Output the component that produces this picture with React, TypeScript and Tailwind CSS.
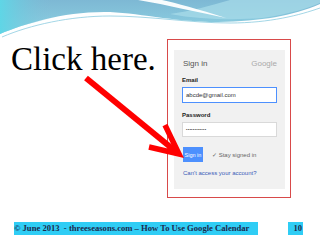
export default function App() {
  return (
    <div className="relative flex h-[240px] w-[320px] flex-col overflow-hidden bg-white font-['Liberation_Sans',Arial,sans-serif]">
      {/* Wave header */}
      <svg className="absolute left-0 top-0" width="320" height="40" viewBox="0 0 320 40">
        <defs>
          <linearGradient id="wv" x1="0" y1="0" x2="0" y2="1">
            <stop offset="0" stopColor="#7db8d4" />
            <stop offset="1" stopColor="#8fd3e3" />
          </linearGradient>
          <linearGradient id="wl" x1="0" y1="0" x2="1" y2="0">
            <stop offset="0" stopColor="#5fd6e6" />
            <stop offset="0.4" stopColor="#7ebfd8" stopOpacity="0" />
          </linearGradient>
        </defs>
        <path d="M0,0 H320 V4 C292,16 262,21 218,22 C172,22 136,12 104,12 C62,12 24,24 0,34 Z" fill="url(#wv)" />
        <path d="M0,0 H130 V12 C60,12 24,24 0,34 Z" fill="url(#wl)" />
        <path d="M170,14 C200,20 240,20 262,18 C290,14 308,8 320,3 V0 H230 C210,6 190,11 170,14 Z" fill="#a9dde9" opacity="0.7" />
        <path d="M138,0 C168,5 196,12 226,18 C198,9 176,3 162,0 Z" fill="#ffffff" opacity="0.95" />
        <path d="M2,37 C30,25 70,16 110,16 C150,16 190,23 230,23 C270,23 300,15 320,8" fill="none" stroke="#8ccbe0" strokeWidth="0.8" />
      </svg>

      {/* Main */}
      <div className="flex pt-[39px]">
        <div className="w-[167px] pl-[11px] pt-[4px] font-['Liberation_Serif',serif] text-[33px] leading-[33px] text-black">
          Click here.
        </div>
        <div className="h-[159px] w-[124px] border border-[#d84a4a] pb-[8px] pl-[6px] pr-[5px] pt-[10px]">
          <div className="flex h-full flex-col bg-[#f1f1f1] px-[8px] pt-[9px] text-[6px] leading-[8px]">
            <div className="flex items-center justify-between pl-[1px] text-[8px] leading-[10px]">
              <span className="text-[#555]">Sign in</span>
              <span className="text-[#aaa]">Google</span>
            </div>
            <div className="mt-[7px] font-bold text-[#222]">Email</div>
            <div className="mt-[3px] flex h-[16px] w-[95px] items-center border border-[#4d90fe] bg-white px-[3px] text-[#333]">
              abcde@gmail.com
            </div>
            <div className="mt-[8px] font-bold text-[#222]">Password</div>
            <div className="mt-[3px] flex h-[15px] w-[95px] items-center border border-[#d9d9d9] bg-white px-[3px] text-[#333]">
              <span className="text-[4px] leading-[4px] tracking-[0.3px]">••••••••••••</span>
            </div>
            <div className="mt-[10px] flex items-center pl-[1px]">
              <div className="flex h-[15px] w-[20px] items-center justify-center bg-[#4d90fe] text-[5.5px] text-white">
                Sign in
              </div>
              <span className="ml-[9px] text-[#666]">✓ Stay signed in</span>
            </div>
            <div className="mt-[7px] pl-[1px] text-[#3a5ab8]">Can't access your account?</div>
          </div>
        </div>
      </div>

      {/* Footer */}
      <div className="mt-[24px] flex font-['Liberation_Serif',serif] text-[8.6px] font-bold leading-[13px] text-[#1c2a4e]">
        <div className="ml-[14px] h-[13px] w-[244px] bg-[#2fcdf5] whitespace-nowrap">
          © June 2013&nbsp; - threeseasons.com – How To Use Google Calendar
        </div>
        <div className="ml-[30px] h-[13px] w-[15px] bg-[#2fcdf5] pr-[1px] text-right">10</div>
      </div>

      {/* Arrow */}
      <svg className="absolute left-0 top-0" width="320" height="240" viewBox="0 0 320 240">
        <line x1="86" y1="78" x2="174" y2="150" stroke="#ff0000" strokeWidth="6" />
        <polyline points="165,125 179,154 149,147" fill="none" stroke="#ff0000" strokeWidth="5.5" strokeLinejoin="miter" />
      </svg>
    </div>
  );
}
